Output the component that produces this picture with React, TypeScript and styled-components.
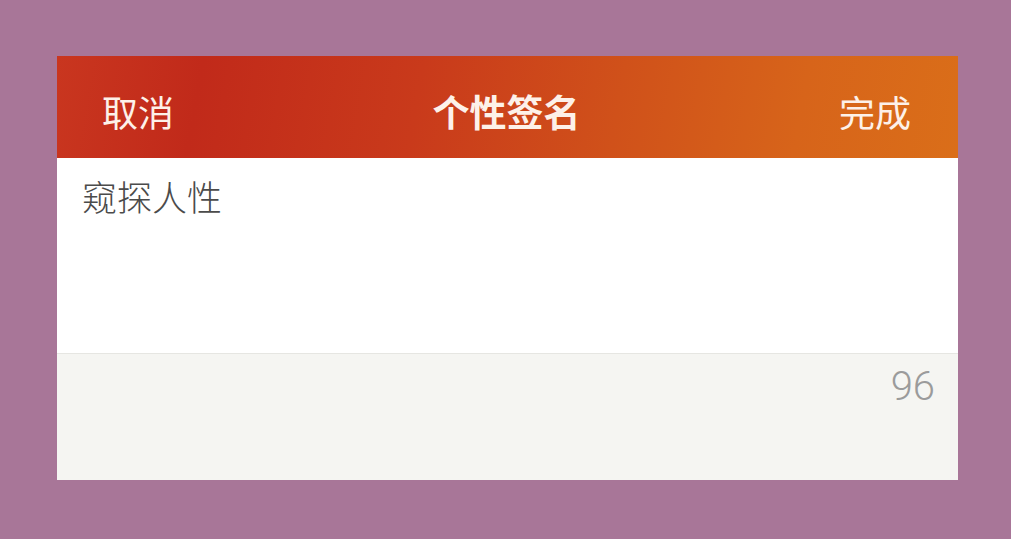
import styled, { createGlobalStyle } from 'styled-components'

const GlobalStyle = createGlobalStyle`
	html, body {
		margin: 0;
		padding: 0;
		background: #a87698;
	}
	body {
		font-family: 'Noto Sans CJK SC', 'Noto Sans', sans-serif;
	}
`

const Page = styled.div`
	width: 1011px;
	height: 539px;
	padding: 56px 0 0 57px;
	box-sizing: border-box;
`

const Card = styled.div`
	width: 901px;
	display: flex;
	flex-direction: column;
	overflow: hidden;
`

const Header = styled.header`
	height: 102px;
	display: grid;
	grid-template-columns: 1fr auto 1fr;
	align-items: center;
	padding: 8px 47px 0 45px;
	box-sizing: border-box;
	color: #fdf1e9;
	background: linear-gradient(
		100deg,
		#c9361f 0%,
		#c12a1a 16%,
		#c93a1b 40%,
		#d0511a 62%,
		#d7641a 82%,
		#da6e19 100%
	);
`

const HeaderAction = styled.span<{ $align: 'left' | 'right' }>`
	justify-self: ${(p) => (p.$align === 'left' ? 'start' : 'end')};
	font-size: 36px;
	font-weight: 400;
	line-height: 1;
`

const Title = styled.span`
	font-size: 37px;
	font-weight: 700;
	line-height: 1;
`

const Editor = styled.div`
	height: 195px;
	background: #fff;
	padding: 17px 25px 0;
	box-sizing: border-box;
	font-size: 35px;
	font-weight: 300;
	line-height: 1.2;
	color: #4b4b4b;
`

const Footer = styled.div`
	height: 127px;
	background: #f5f5f2;
	border-top: 1px solid #e6e6e2;
	display: flex;
	justify-content: flex-end;
	padding: 9px 23px 0 0;
	box-sizing: border-box;
`

const Counter = styled.span`
	font-family: Roboto, 'Liberation Sans', sans-serif;
	font-weight: 300;
	font-size: 40px;
	line-height: 1.2;
	color: #9b9b9b;
`

export default function App() {
	return (
		<>
			<GlobalStyle />
			<Page>
				<Card>
					<Header>
						<HeaderAction $align="left">取消</HeaderAction>
						<Title>个性签名</Title>
						<HeaderAction $align="right">完成</HeaderAction>
					</Header>
					<Editor>窥探人性</Editor>
					<Footer>
						<Counter>96</Counter>
					</Footer>
				</Card>
			</Page>
		</>
	)
}
